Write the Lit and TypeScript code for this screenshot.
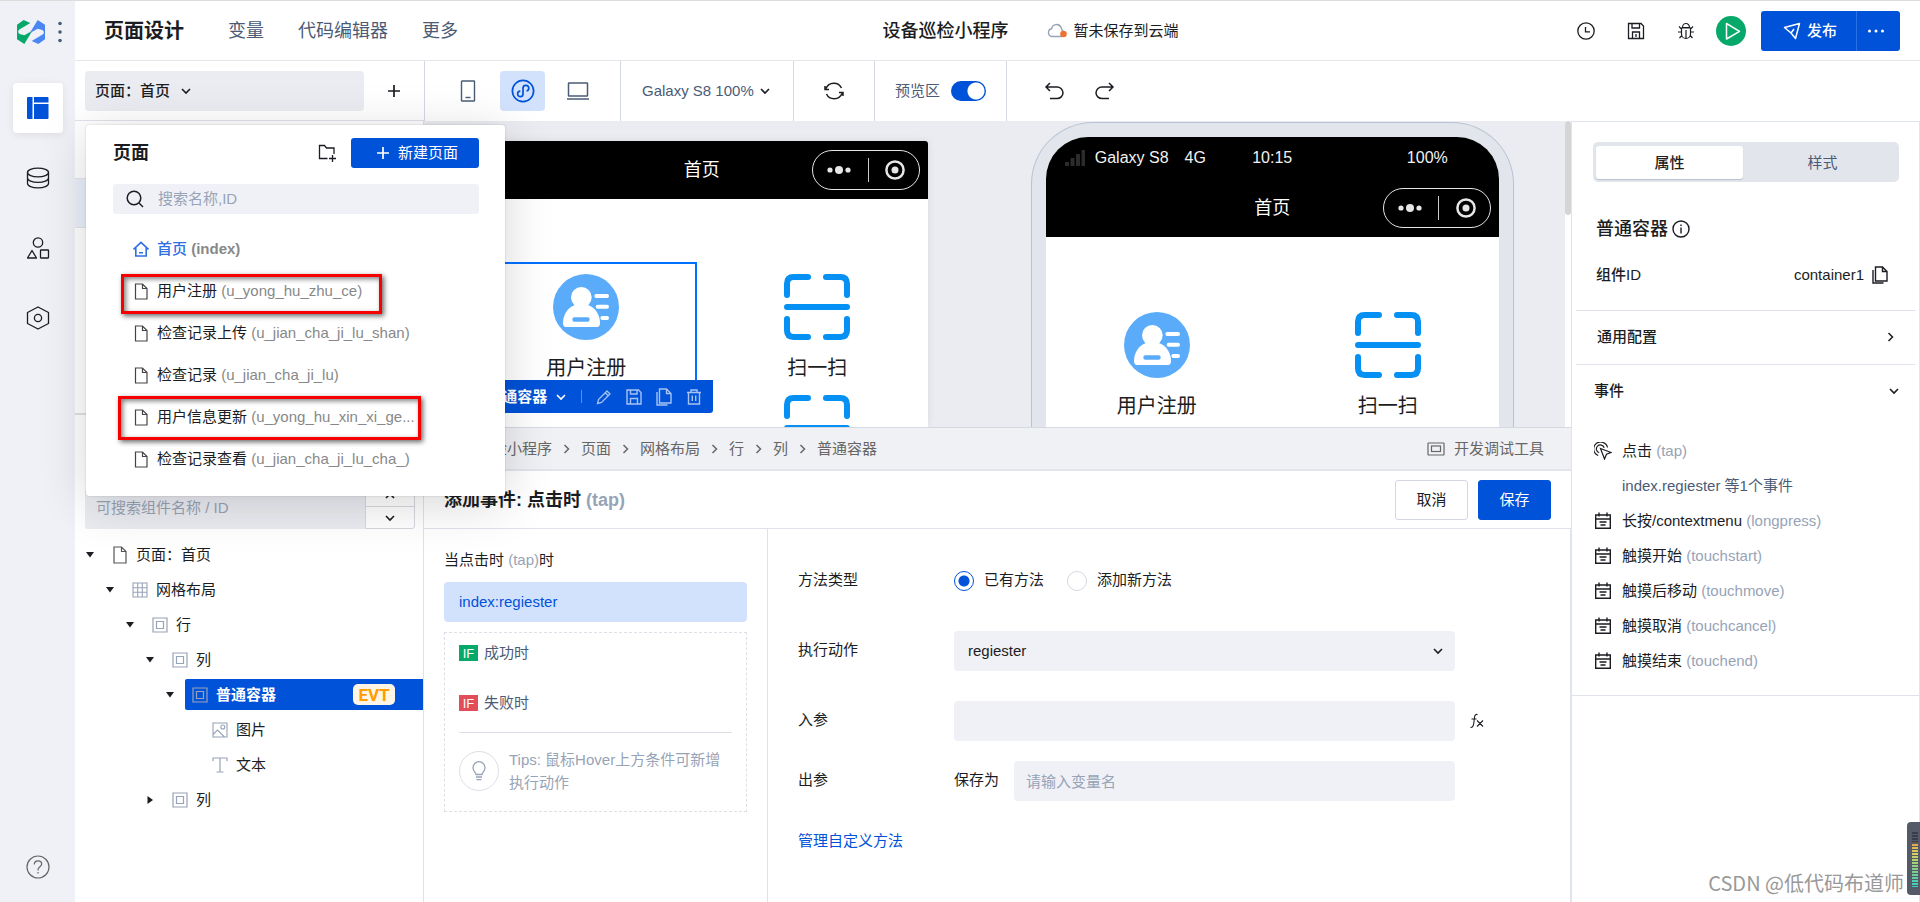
import { LitElement, html, css, svg, nothing } from "lit";
import { customElement, property } from "lit/decorators.js";
import { classMap } from "lit/directives/class-map.js";

const base = css`
  :host {
    box-sizing: border-box;
    font-family: "Liberation Sans", "Noto Sans CJK SC", sans-serif;
    font-size: 15px;
    line-height: 22px;
    color: #1b1d22;
  }
  *,
  *::before,
  *::after {
    box-sizing: border-box;
  }
  button,
  input,
  select {
    font: inherit;
    color: inherit;
    margin: 0;
    padding: 0;
    border: 0;
    background: none;
    border-radius: 0;
  }
  button {
    display: inline-flex;
    align-items: center;
    justify-content: center;
    cursor: pointer;
  }
  svg {
    display: block;
    flex: none;
  }
  a {
    text-decoration: none;
    color: inherit;
  }
  h1,
  h2,
  h3,
  p,
  ul {
    margin: 0;
    padding: 0;
    list-style: none;
  }
  .muted {
    color: #97a3b7;
  }
`;

const icon = (w: number, h: number, body: unknown, width = 1.5) => html`<svg
  width=${w}
  height=${h}
  viewBox="0 0 ${w} ${h}"
  fill="none"
  stroke="currentColor"
  stroke-width=${width}
  aria-hidden="true"
>${body}</svg>`;

const icons = {
  logo: html`<svg width="28" height="24" viewBox="0 0 84 72" aria-hidden="true">
    <path fill="#07a96b" d="M0 14L20 0L40 9L6 29Q0 36 8 42L22 46L46 32L22 72L0 58Z" />
    <path fill="#4a87f2" d="M84 58L64 72L44 63L78 43Q84 36 76 30L62 26L38 40L62 0L84 14Z" />
  </svg>`,
  layout: html`<svg width="22" height="22" viewBox="0 0 22 22" fill="#0052d9" aria-hidden="true">
    <path d="M1 0h4.500v22h-4.500a1 1 0 0 1-1-1v-20a1 1 0 0 1 1-1zM7 0h13.500a1 1 0 0 1 1 1v4.500h-14.500zM7 7h14.500v14a1 1 0 0 1-1 1h-13.500z" />
  </svg>`,
  database: icon(24, 22, svg`<ellipse cx="12" cy="5.500" rx="10.500" ry="4.300"/><path d="M1.500 5.500v11c0 2.400 4.700 4.300 10.500 4.300s10.500-1.900 10.500-4.300v-11M1.500 11c0 2.400 4.700 4.300 10.500 4.300s10.500-1.900 10.500-4.300"/>`, 1.3),
  shapes: icon(24, 22, svg`<circle cx="12" cy="5.500" r="4.700"/><path d="M6 13.500l4.500 7.500h-9z" stroke-linejoin="round"/><rect x="14.500" y="13" width="8" height="8" rx="0.500"/>`, 1.3),
  hexagon: icon(24, 24, svg`<path d="M12 1l10.500 5.500v11L12 23 1.500 17.500v-11z" stroke-linejoin="round"/><circle cx="12" cy="12" r="3.600"/>`, 1.3),
  help: icon(24, 24, svg`<circle cx="12" cy="12" r="11"/><path d="M8.300 9.500c0-2.200 1.600-3.700 3.700-3.700s3.700 1.400 3.700 3.300c0 2.500-3.700 2.800-3.700 5.700v.7M12 17v1.500"/>`, 1.2),
  down: icon(12, 12, svg`<path d="M2 4l4 4 4-4"/>`, 1.6),
  up: icon(12, 12, svg`<path d="M2 8l4-4 4 4"/>`, 1.6),
  right: icon(9, 12, svg`<path d="M2.500 2l4 4-4 4"/>`, 1.5),
  plus: icon(14, 14, svg`<path d="M7 1v12M1 7h12"/>`, 1.7),
  phone: icon(16, 22, svg`<rect x="1.500" y="1" width="13" height="20" rx="0.500"/><path d="M5.500 17.500h5"/>`, 1.4),
  mini: icon(24, 24, svg`<circle cx="12" cy="12" r="10.600"/><path d="M9.300 12.200a2.700 2.700 0 1 0 2.700 2.700V9.200a2.900 2.900 0 1 1 3.600 2.800"/>`, 1.7),
  laptop: icon(24, 20, svg`<rect x="2.500" y="2" width="19" height="13" rx="0.500"/><path d="M1 18h22"/>`, 1.5),
  refresh: icon(20, 20, svg`<path d="M2 7.500a8.500 8.500 0 0 1 15.500-.5M18 12.500a8.500 8.500 0 0 1-15.500.5M1 5v3.500h4M19 15v-3.500h-4"/>`, 1.5),
  undo: icon(20, 18, svg`<path d="M2 5h11a6 5.800 0 0 1 0 11.600H6M6 1L2 5l4 4"/>`, 1.5),
  redo: icon(20, 18, svg`<path d="M18 5H7a6 5.800 0 0 0 0 11.600h7M14 1l4 4-4 4"/>`, 1.5),
  cloud: html`<svg width="22" height="16" viewBox="0 0 22 16" fill="none" aria-hidden="true">
    <path d="M15 13.500H5a3.900 3.900 0 0 1-.4-7.700 5 5 0 0 1 9.500-1.300c.9 2 .4 3 2.900 4.500" stroke="#97a3b7" stroke-width="1.400" />
    <circle cx="16.500" cy="11" r="3.300" fill="#ed7230" />
  </svg>`,
  clock: icon(18, 18, svg`<circle cx="9" cy="9" r="8.200"/><path d="M8.500 5v4.800H13"/>`, 1.3),
  save: icon(18, 18, svg`<path d="M1.500 1.500h12.500l2.500 2.500v12.500h-15zM5 1.500v4.500h7.500v-4.500M5.500 16.500v-6.500h7v6.500M9 12v3" />`, 1.3),
  bug: icon(18, 18, svg`<path d="M5.500 5.500a3.500 4 0 0 1 7 0zM4.500 6h9v6a4.500 4.500 0 0 1-9 0zM9 8v9M4.500 10H1M13.500 10H17M4.500 7L2 4.500M13.500 7L16 4.500M4.800 13.500L2.500 16M13.200 13.500l2.300 2.500"/>`, 1.2),
  play: icon(30, 30, svg`<path d="M10.500 7.500v15.500l13-7.700z" stroke-linejoin="round"/>`, 1.5),
  plane: icon(18, 18, svg`<path d="M1.500 5.500L16.500 1.500 12.500 16.500 8 11zM8 11l3-4" stroke-linejoin="round"/>`, 1.5),
  dots: html`<svg width="18" height="6" viewBox="0 0 18 6" fill="currentColor" aria-hidden="true">
    <circle cx="2.500" cy="3" r="1.500" /><circle cx="9" cy="3" r="1.500" /><circle cx="15.500" cy="3" r="1.500" />
  </svg>`,
  folder: icon(18, 18, svg`<path d="M9.500 14.500H1.500v-13h5l2 2.500h7.500v6M14.500 11v7M11 14.500h7"/>`, 1.3),
  search: icon(18, 18, svg`<circle cx="8" cy="8" r="6.800"/><path d="M13 13l4 4"/>`, 1.5),
  home: icon(16, 16, svg`<path d="M0.500 8.500L8 1.300l7.500 7.200M2.800 7v8h10.400V7M6 11.800h4" />`, 1.6),
  file: icon(14, 17, svg`<path d="M1.500 1h7l4.500 4.500v10.500h-11.500zM8.500 1v4.500h4.500" />`, 1.2),
  filePage: icon(14, 18, svg`<path d="M1 1h7.500l4.500 4.500v11.500h-12zM8.500 1v4.500h4.500" />`, 1.2),
  grid: icon(16, 16, svg`<path d="M1 1h14v14h-14zM5.700 1v14M10.300 1v14M1 5.700h14M1 10.300h14"/>`, 1.1),
  box: icon(16, 16, svg`<path d="M1 1h14v14h-14zM4.500 4.500h7v7h-7z"/>`, 1.2),
  image: icon(16, 16, svg`<path d="M1 1h14v14h-14zM1 12.500l4.500-4.500 7 7"/><circle cx="10.800" cy="5" r="2"/>`, 1.1),
  text: icon(16, 16, svg`<path d="M1 4v-3h14v3M8 1v14M4.500 15h7"/>`, 1.2),
  info: icon(18, 18, svg`<circle cx="9" cy="9" r="8"/><path d="M9 7.500v6M9 4.500v1.500"/>`, 1.4),
  copy: icon(16, 18, svg`<path d="M3.500 1h7l4.500 4.500v9.500h-11.500zM10.500 1v4.500h4.500M1 4v13h10.500"/>`, 1.4),
  pencil: icon(16, 16, svg`<path d="M1.500 14.500l1-4L11 2l3 3-8.500 8.500zM9.200 3.800l3 3"/>`, 1.3),
  trash: icon(16, 16, svg`<path d="M1 3.500h14M5 3.500V1h6v2.500M2.500 3.500v11.500h11V3.500M6.300 6.500v5.500M9.700 6.500v5.500"/>`, 1.4),
  devtool: icon(18, 14, svg`<rect x="1" y="1" width="16" height="12" rx="0.500"/><rect x="4.500" y="4" width="9" height="5.500"/>`, 1.2),
  bulb: icon(16, 20, svg`<path d="M5 13.500c0-2-3-3.200-3-6.800a6 6 0 0 1 12 0c0 3.600-3 4.800-3 6.800zM5 16h6M5.500 18.700h5"/>`, 1.3),
  click: icon(18, 18, svg`<path d="M6.500 6.500l10.500 4-4.500 1.800-2 4.700zM4.200 13.500A7 7 0 1 1 13.500 5.500M5.200 10.800a4 4 0 1 1 5-5"/>`, 1.2),
  event: icon(18, 18, svg`<path d="M1.700 3h14.600v13.300h-14.600zM5 .5v4M13 .5v4M1.700 7h14.600M5.500 10h7M6.500 13h5"/>`, 1.4),
  fx: icon(16, 18, svg`<path d="M8.500 2.500c-3-1-3 3-3.300 5.500-.5 4-.7 8-3.700 7.500M2.500 7h5M8 8.500l6 6M14 8.500l-6 6"/>`, 1.1),
  signal: html`<svg width="20" height="16" viewBox="0 0 20 16" fill="#2b2b2b" aria-hidden="true">
    <path d="M0 12h4v4h-4zM5.500 8h4v8h-4zM11 4h4v12h-4zM16.500 0h3.500v16h-3.500z" />
  </svg>`,
  user: html`<svg width="66" height="66" viewBox="0 0 198 198" fill="#fff" aria-hidden="true">
    <circle cx="99" cy="99" r="99" fill="#5aacfa" />
    <circle cx="85" cy="70" r="31" />
    <path d="M30 146C30 114 55 93 70 93H100C116 93 141 114 141 146Q141 159 132 159H39Q30 159 30 146Z" />
    <rect x="58" y="130" width="52" height="13" rx="6" fill="#5aacfa" />
    <rect x="124" y="60" width="44" height="12" rx="6" /><rect x="128" y="92" width="40" height="12" rx="6" /><rect x="142" y="126" width="26" height="12" rx="6" />
  </svg>`,
  scan: html`<svg width="66" height="66" viewBox="0 0 198 198" fill="none" stroke="#0590f3" stroke-width="18" stroke-linecap="round" aria-hidden="true">
    <path d="M9 63V29Q9 9 29 9H72M126 9H169Q189 9 189 29V63M9 135V169Q9 189 29 189H72M126 189H169Q189 189 189 169V135M9 99H189" />
  </svg>`,
};

@customElement("mini-page")
class MiniPage extends LitElement {
  @property({ type: Boolean }) selected = false;

  static styles = [
    base,
    css`
      :host {
        display: block;
        background: #fff;
        width: 453px;
        flex: 1;
      }
      .nav {
        background: #000;
        color: #fff;
        height: 58px;
        display: grid;
        grid-template-columns: 1fr auto 1fr;
        align-items: center;
        padding: 0 8px;
        font-size: 18px;
      }
      .capsule {
        grid-column: 3;
        justify-self: end;
        width: 108px;
        height: 40px;
        border: 1px solid #e6e6e6;
        border-radius: 20px;
        display: flex;
        align-items: center;
        justify-content: space-between;
        padding: 0 14px;
      }
      .title {
        grid-column: 2;
      }
      .bar {
        width: 1px;
        height: 24px;
        background: #ccc;
      }
      .grid {
        display: grid;
        grid-template-columns: 1fr 1fr;
        gap: 9px;
        padding-top: 63px;
      }
      .tile {
        position: relative;
        height: 121px;
        padding-top: 12px;
        display: flex;
        flex-direction: column;
        align-items: center;
        gap: 13px;
        font-size: 20px;
        line-height: 30px;
      }
      .selected::after {
        content: "";
        position: absolute;
        inset: 0;
        border: 2px solid #0070ff;
      }
      .tools {
        position: absolute;
        z-index: 1;
        top: 118px;
        right: -16px;
        height: 33px;
        padding: 0 11px 0 12px;
        display: flex;
        align-items: center;
        gap: 14px;
        background: #0052d9;
        color: #a6c3f2;
        border-radius: 0 0 3px 3px;
        font-size: 15px;
        line-height: 22px;
      }
      .tools .name {
        color: #fff;
        font-weight: 700;
        gap: 8px;
        white-space: nowrap;
      }
      .tools .sep {
        width: 1px;
        height: 13px;
        background: #5b8fe6;
      }
    `,
  ];

  render() {
    const tile = (pic: unknown, label: string) => html`<div class="tile">${pic}<span>${label}</span></div>`;
    return html`
      <div class="nav">
        <span class="title">首页</span>
        <span class="capsule">
          <svg width="24" height="10" viewBox="0 0 24 10" fill="#e6e6e6"><circle cx="3" cy="5" r="2.600" /><circle cx="12" cy="5" r="4" /><circle cx="21" cy="5" r="2.600" /></svg>
          <span class="bar"></span>
          <svg width="20" height="20" viewBox="0 0 20 20"><circle cx="10" cy="10" r="8.600" fill="none" stroke="#e6e6e6" stroke-width="2.500" /><circle cx="10" cy="10" r="3.500" fill="#e6e6e6" /></svg>
        </span>
      </div>
      <div class="grid">
        <div>
          <div class=${classMap({ tile: true, selected: this.selected })}>
            ${icons.user}<span>用户注册</span>
            ${this.selected
              ? html`<div class="tools">
                  <button class="name">普通容器 ${icons.down}</button>
                  <span class="sep"></span>
                  <button aria-label="编辑">${icons.pencil}</button>
                  <button aria-label="保存">${icon(16, 16, svg`<path d="M1 1h11.500l2.500 2.500v11.500h-14zM4.500 1v4h6.500v-4M4.500 15v-5.500h7v5.500"/>`, 1.4)}</button>
                  <button aria-label="复制">${icons.copy}</button>
                  <button aria-label="删除">${icons.trash}</button>
                </div>`
              : nothing}
          </div>
        </div>
        <div>${tile(icons.scan, "扫一扫")}${this.selected ? tile(icons.scan, "") : nothing}</div>
      </div>
    `;
  }
}

const pages = [
  ["用户注册", "(u_yong_hu_zhu_ce)"],
  ["检查记录上传", "(u_jian_cha_ji_lu_shan)"],
  ["检查记录", "(u_jian_cha_ji_lu)"],
  ["用户信息更新", "(u_yong_hu_xin_xi_ge..."],
  ["检查记录查看", "(u_jian_cha_ji_lu_cha_)"],
];

@customElement("page-popup")
class PagePopup extends LitElement {
  static styles = [
    base,
    css`
      :host {
        display: block;
        background: #fff;
        border-radius: 3px;
        padding: 13px 26px 16px 27px;
        box-shadow: 0 0 2px rgba(0, 0, 0, 0.2), 0 8px 50px rgba(0, 0, 0, 0.16);
      }
      .head {
        display: flex;
        align-items: center;
        gap: 15px;
      }
      h2 {
        flex: 1;
        font-size: 18px;
        font-weight: 700;
      }
      .new {
        width: 128px;
        height: 30px;
        gap: 8px;
        padding-left: 4px;
        border-radius: 3px;
        background: #0052d9;
        color: #fff;
      }
      .search {
        display: flex;
        align-items: center;
        gap: 14px;
        height: 30px;
        margin: 16px 0 14px;
        padding-left: 13px;
        background: #eff1f6;
        border-radius: 3px;
      }
      input {
        flex: 1;
        outline: 0;
      }
      input::placeholder {
        color: #97a3b7;
      }
      li a {
        display: flex;
        align-items: center;
        gap: 8px;
        height: 42px;
        padding: 0 40px 0 20px;
      }
      .pic {
        flex: none;
        width: 16px;
        display: flex;
        justify-content: center;
        color: #444;
      }
      .name {
        white-space: nowrap;
      }
      .id {
        color: #888;
      }
      .home {
        color: #2e6fe4;
        font-weight: 500;
      }
      .home .id {
        font-weight: 700;
      }
      .home .pic {
        color: #2e6fe4;
      }
      .mark {
        position: absolute;
        border: 3px solid #f60000;
        box-shadow: 2px 2px 5px rgba(0, 0, 0, 0.6), inset 2px 2px 5px rgba(0, 0, 0, 0.5);
        pointer-events: none;
      }
      .register {
        left: 35px;
        top: 149px;
        width: 261px;
        height: 40px;
      }
      .update {
        left: 32px;
        top: 271px;
        width: 303px;
        height: 44px;
      }
    `,
  ];

  render() {
    return html`
      <div class="head">
        <h2>页面</h2>
        <button aria-label="新建文件夹">${icons.folder}</button>
        <button class="new">${icons.plus} 新建页面</button>
      </div>
      <label class="search">${icons.search}<input aria-label="搜索" placeholder="搜索名称,ID" /></label>
      <ul>
        <li>
          <a href="#index" class="home"><span class="pic">${icons.home}</span><span class="name">首页 <span class="id">(index)</span></span></a>
        </li>
        ${pages.map(
          ([name, id]) => html`<li>
            <a href="#"><span class="pic">${icons.file}</span><span class="name">${name} <span class="id">${id}</span></span></a>
          </li>`
        )}
      </ul>
      <span class="mark register"></span>
      <span class="mark update"></span>
    `;
  }
}

@customElement("outline-tree")
class OutlineTree extends LitElement {
  static styles = [
    base,
    css`
      :host {
        display: flex;
        flex-direction: column;
        border-right: 1px solid #dfe2e8;
        min-height: 0;
      }
      .pages {
        padding-top: 57px;
        height: 294px;
        border-bottom: 2px solid #e0e0e0;
      }
      .current {
        height: 50px;
        background: #eaf0fb;
        border: 1px solid #e1e5ee;
        border-width: 1px 0;
      }
      .find {
        display: flex;
        padding: 74px 8px 0 10px;
      }
      .find input {
        flex: 1;
        height: 40px;
        padding: 0 11px 4px;
        background: #ebecf1;
        border-radius: 3px 0 0 3px;
        outline: 0;
      }
      input::placeholder {
        color: #97a3b7;
      }
      .step {
        display: flex;
        flex-direction: column;
        width: 50px;
        border: 1px solid #d5d8de;
        border-radius: 0 3px 3px 0;
      }
      .step button {
        flex: 1;
      }
      .step button:first-child {
        padding-bottom: 4px;
      }
      .step button + button {
        flex: 0 0 22px;
        border-top: 1px solid #d5d8de;
      }
      ul {
        padding-top: 8px;
      }
      .row {
        display: flex;
        align-items: center;
        height: 35px;
        padding-left: calc(10px + var(--depth) * 20px);
      }
      .caret {
        width: 10px;
        display: flex;
        justify-content: center;
      }
      .node {
        flex: 1;
        display: flex;
        align-items: center;
        gap: 8px;
        height: 31px;
        margin-left: 10px;
        padding-left: 7px;
        border-radius: 2px 0 0 2px;
      }
      .pic {
        color: #97a3b7;
        width: 16px;
        display: flex;
        justify-content: center;
      }
      .root .pic {
        color: #555;
      }
      .active {
        background: #0052d9;
        color: #fff;
        font-weight: 700;
      }
      .badge {
        margin-left: auto;
        margin-right: 28px;
        width: 42px;
        height: 21px;
        border-radius: 5px;
        background: #fff5e6;
        color: #ff9d00;
        font-family: Roboto, sans-serif;
        font-size: 17px;
        line-height: 23px;
        text-align: center;
      }
    `,
  ];

  rows: [number, string, string, unknown][] = [
    [0, "open", "页面：首页", icons.filePage],
    [1, "open", "网格布局", icons.grid],
    [2, "open", "行", icons.box],
    [3, "open", "列", icons.box],
    [4, "open", "普通容器", icons.box],
    [5, "", "图片", icons.image],
    [5, "", "文本", icons.text],
    [3, "closed", "列", icons.box],
  ];

  render() {
    return html`
      <div class="pages"><div class="current"></div></div>
      <div class="find">
        <input aria-label="搜索组件" placeholder="可搜索组件名称 / ID" />
        <div class="step">
          <button aria-label="上一个">${icons.up}</button>
          <button aria-label="下一个">${icons.down}</button>
        </div>
      </div>
      <ul>
        ${this.rows.map(([depth, state, label, pic]) => {
          const active = depth === 4;
          return html`<li class=${classMap({ row: true, root: depth === 0 })} style="--depth:${depth}">
            <span class="caret">
              ${state
                ? html`<svg width="10" height="10" viewBox="0 0 10 10" fill="#1b1d22"><path d=${state === "open" ? "M1 2h8l-4 5.500z" : "M2.500 1v8l5.500-4z"} /></svg>`
                : nothing}
            </span>
            <span class=${classMap({ node: true, active })}>
              <span class="pic">${pic}</span>${label}${active ? html`<span class="badge">EVT</span>` : nothing}
            </span>
          </li>`;
        })}
      </ul>
    `;
  }
}

@customElement("event-editor")
class EventEditor extends LitElement {
  static styles = [
    base,
    css`
      :host {
        display: flex;
        flex-direction: column;
        background: #fff;
        border-top: 1px solid #d5d9e2;
      }
      .crumbs {
        display: flex;
        align-items: center;
        justify-content: space-between;
        height: 43px;
        padding: 0 27px 0 23px;
        background: #eff1f5;
        border-bottom: 2px solid #e2e4ec;
        color: #666;
      }
      .path {
        display: flex;
        align-items: center;
        gap: 10px;
      }
      .devtool {
        gap: 9px;
      }
      .head {
        display: flex;
        align-items: center;
        gap: 10px;
        height: 58px;
        padding: 0 20px;
        border-bottom: 1px solid #dfe2ea;
      }
      h2 {
        flex: 1;
        font-size: 18px;
        line-height: 26px;
        font-weight: 700;
      }
      .btn {
        width: 73px;
        height: 40px;
        border: 1px solid #d3d8e2;
        border-radius: 3px;
      }
      .primary {
        background: #0052d9;
        border-color: #0052d9;
        color: #fff;
      }
      .body {
        flex: 1;
        display: grid;
        grid-template-columns: 344px 1fr;
        border-right: 1px solid #e0e4ec;
      }
      .flow {
        border-right: 1px solid #dfe2ea;
        padding: 20px 20px 0;
      }
      .action {
        display: flex;
        align-items: center;
        width: 100%;
        height: 40px;
        margin: 11px 0 10px;
        padding: 0 15px;
        justify-content: flex-start;
        background: #d3e2fc;
        color: #0052d9;
        border-radius: 4px;
      }
      .branch {
        border: 1px dashed #dcdfe6;
        padding: 0 14px 17px;
      }
      .cond {
        display: flex;
        align-items: center;
        gap: 6px;
        height: 40px;
        color: #4b5b76;
      }
      .cond + .cond {
        margin-top: 10px;
      }
      .if {
        width: 19px;
        height: 16px;
        background: #07a96b;
        color: #fff;
        font-size: 13px;
        line-height: 17px;
        text-align: center;
      }
      .fail {
        background: #e34d59;
      }
      .tips {
        display: flex;
        align-items: center;
        gap: 10px;
        margin-top: 9px;
        padding-top: 15px;
        border-top: 1px solid #dcdfe6;
        color: #97a3b7;
        line-height: 23px;
      }
      .tips p {
        flex: 1;
      }
      .bulb {
        width: 40px;
        height: 40px;
        border: 1px solid #dcdfe6;
        border-radius: 50%;
        display: flex;
        align-items: center;
        justify-content: center;
      }
      .form {
        padding: 32px 0 0 30px;
      }
      .field {
        display: grid;
        grid-template-columns: 156px 1fr 115px;
        height: 40px;
        margin-bottom: 30px;
      }
      .tight {
        margin-bottom: 20px;
      }
      .label {
        line-height: 38px;
      }
      .radios {
        display: flex;
        gap: 23px;
      }
      .radios label {
        display: flex;
        align-items: flex-start;
        gap: 10px;
        line-height: 38px;
      }
      input[type="radio"] {
        appearance: none;
        width: 20px;
        height: 20px;
        margin-top: 10px;
        border: 1px solid #d3d8e2;
        border-radius: 50%;
      }
      input[type="radio"]:checked {
        border-color: #0052d9;
        background: radial-gradient(circle, #0052d9 5px, transparent 6px);
      }
      .pick {
        display: grid;
        align-items: center;
      }
      .pick select,
      .pick svg {
        grid-area: 1 / 1;
      }
      .pick svg {
        justify-self: end;
        margin-right: 11px;
        pointer-events: none;
      }
      select,
      .text {
        appearance: none;
        width: 100%;
        height: 40px;
        padding: 0 14px;
        background: #eff1f6;
        border-radius: 4px;
        outline: 0;
      }
      .fx {
        width: 16px;
        margin-left: 14px;
      }
      .save {
        display: flex;
        gap: 15px;
      }
      .save .text {
        flex: 1;
        padding: 0 12px;
      }
      .text::placeholder {
        color: #97a3b7;
      }
      .link {
        line-height: 40px;
        color: #0052d9;
      }
    `,
  ];

  render() {
    const crumbs = ["设备巡检小程序", "页面", "网格布局", "行", "列", "普通容器"];
    return html`
      <div class="crumbs">
        <nav class="path">${crumbs.map((c, i) => html`${i ? icons.right : nothing}<a href="#">${c}</a>`)}</nav>
        <button class="devtool">${icons.devtool} 开发调试工具</button>
      </div>
      <div class="head">
        <h2>添加事件: 点击时 <span class="muted">(tap)</span></h2>
        <button class="btn">取消</button>
        <button class="btn primary">保存</button>
      </div>
      <div class="body">
        <div class="flow">
          <p>当点击时 <span class="muted">(tap)</span>时</p>
          <button class="action">index:regiester</button>
          <div class="branch">
            <div class="cond"><span class="if">IF</span>成功时</div>
            <div class="cond"><span class="if fail">IF</span>失败时</div>
            <div class="tips">
              <span class="bulb">${icons.bulb}</span>
              <p>Tips: 鼠标Hover上方条件可新增执行动作</p>
            </div>
          </div>
        </div>
        <div class="form">
          <div class="field">
            <span class="label">方法类型</span>
            <div class="radios">
              <label><input type="radio" name="kind" checked />已有方法</label>
              <label><input type="radio" name="kind" />添加新方法</label>
            </div>
          </div>
          <div class="field">
            <label class="label" for="act">执行动作</label>
            <div class="pick">
              <select id="act"><option>regiester</option></select>
              ${icons.down}
            </div>
          </div>
          <div class="field tight">
            <label class="label" for="params">入参</label>
            <input class="text" id="params" />
            <button class="fx" aria-label="表达式">${icons.fx}</button>
          </div>
          <div class="field tight">
            <span class="label">出参</span>
            <div class="save">
              <label class="label" for="out">保存为</label>
              <input class="text" id="out" placeholder="请输入变量名" />
            </div>
          </div>
          <a class="link" href="#">管理自定义方法</a>
        </div>
      </div>
    `;
  }
}

@customElement("props-panel")
class PropsPanel extends LitElement {
  static styles = [
    base,
    css`
      :host {
        display: block;
        background: #fff;
        border: 1px solid #e0e4ec;
        border-bottom: 0;
      }
      .tabs {
        display: grid;
        grid-template-columns: 147px 1fr;
        gap: 3px;
        height: 40px;
        margin: 20px 20px 0 21px;
        padding: 4px 0 3px 3px;
        border-radius: 5px;
        background: #e2e6ec;
        color: #4b5b76;
      }
      .tabs .on {
        background: #fff;
        border-radius: 3px;
        color: #1b1d22;
        font-weight: 500;
        box-shadow: 0 1px 1px #b8c1d0;
      }
      .title {
        display: flex;
        align-items: center;
        gap: 4px;
        height: 26px;
        margin: 34px 24px 0;
      }
      h2 {
        font-size: 18px;
        font-weight: 500;
      }
      .id {
        display: flex;
        align-items: center;
        gap: 8px;
        margin: 22px 31px 24px 24px;
      }
      .id b {
        flex: 1;
        font-weight: 500;
      }
      .fold {
        display: flex;
        justify-content: space-between;
        align-items: center;
        height: 54px;
        margin: 0 4px;
        padding: 0 20px 2px 21px;
        border-top: 1px solid #dfe2ea;
      }
      .open {
        padding: 0 15px 2px 18px;
      }
      h3 {
        font-size: 15px;
        font-weight: 500;
      }
      .events {
        padding: 15px 22px 17px;
        border-bottom: 1px solid #dfe2ea;
      }
      li {
        display: flex;
        align-items: center;
        gap: 10px;
        height: 35px;
      }
      li .bound {
        margin-left: 28px;
        color: #4b5b76;
      }
    `,
  ];

  render() {
    const events = [
      ["长按/contextmenu", "(longpress)"],
      ["触摸开始", "(touchstart)"],
      ["触摸后移动", "(touchmove)"],
      ["触摸取消", "(touchcancel)"],
      ["触摸结束", "(touchend)"],
    ];
    return html`
      <div class="tabs"><button class="on">属性</button><button>样式</button></div>
      <div class="title"><h2>普通容器</h2>${icons.info}</div>
      <div class="id"><b>组件ID</b><span>container1</span>${icons.copy}</div>
      <div class="fold"><h3>通用配置</h3>${icons.right}</div>
      <div class="fold open"><h3>事件</h3>${icons.down}</div>
      <ul class="events">
        <li>${icons.click}<span>点击 <span class="muted">(tap)</span></span></li>
        <li><a class="bound" href="#">index.regiester 等1个事件</a></li>
        ${events.map(([n, k]) => html`<li>${icons.event}<span>${n} <span class="muted">${k}</span></span></li>`)}
      </ul>
    `;
  }
}

@customElement("app-root")
class AppRoot extends LitElement {
  static styles = [
    base,
    css`
      :host {
        display: grid;
        grid-template-columns: 75px 1fr;
        grid-template-rows: minmax(0, 1fr);
        height: 100vh;
        overflow: hidden;
        position: relative;
        border-top: 1px solid #dcdcdc;
        background: #fff;
      }
      .rail {
        display: flex;
        flex-direction: column;
        align-items: center;
        gap: 20px;
        padding-bottom: 10px;
        background: #eff1f6;
      }
      .brand {
        display: flex;
        align-items: center;
        justify-content: flex-end;
        gap: 13px;
        width: 100%;
        height: 62px;
        padding-right: 13px;
        color: #4b5b76;
      }
      .rail button {
        width: 50px;
        height: 50px;
        border-radius: 4px;
      }
      .rail .on {
        background: #fff;
        box-shadow: 0 2px 8px rgba(0, 0, 0, 0.08);
      }
      .rail .help {
        margin-top: auto;
        color: #666;
      }
      .main {
        display: flex;
        flex-direction: column;
        min-width: 0;
        min-height: 0;
      }
      header {
        display: grid;
        grid-template-columns: 1fr auto 1fr;
        align-items: center;
        height: 60px;
        padding: 0 20px 0 29px;
        border-bottom: 1px solid #e4e6eb;
      }
      nav {
        display: flex;
        align-items: center;
        gap: 34px;
        font-size: 18px;
        line-height: 26px;
        color: #4b5b76;
      }
      h1 {
        margin-right: 10px;
        font-size: 20px;
        font-weight: 700;
        color: #1b1d22;
      }
      .project {
        display: flex;
        align-items: center;
        gap: 39px;
        padding-left: 57px;
      }
      .project b {
        font-size: 18px;
        font-weight: 500;
      }
      .state {
        display: flex;
        align-items: center;
        gap: 4px;
      }
      .actions {
        display: flex;
        align-items: center;
        justify-content: flex-end;
      }
      .actions .tool {
        width: 50px;
        height: 40px;
      }
      .run {
        width: 30px;
        height: 30px;
        margin: 0 15px 0 5px;
        border-radius: 50%;
        background: #07a96b;
        color: #fff;
      }
      .publish {
        width: 95px;
        height: 40px;
        gap: 6px;
        padding-left: 3px;
        font-weight: 500;
        border-radius: 3px 0 0 3px;
        background: #0052d9;
        color: #fff;
      }
      .more {
        width: 44px;
        height: 40px;
        padding-right: 5px;
        border-left: 1px solid #2a70e6;
        border-radius: 0 3px 3px 0;
        background: #0052d9;
        color: #fff;
      }
      .toolbar {
        display: flex;
        height: 60px;
      }
      .cell {
        display: flex;
        align-items: center;
        border-right: 1px solid #d3d8e2;
        color: #4b5b76;
        white-space: nowrap;
      }
      .page {
        position: relative;
        width: 350px;
        padding-left: 10px;
        border-bottom: 1px solid #dfe2e8;
        color: #1b1d22;
      }
      .page .current {
        flex: 1;
        height: 40px;
        justify-content: flex-start;
        gap: 10px;
        padding: 0 10px;
        border-radius: 4px;
        background: #ebecf1;
        font-weight: 500;
      }
      .page .add {
        width: 60px;
        height: 40px;
      }
      page-popup {
        position: absolute;
        z-index: 5;
        left: 11px;
        top: 64px;
        width: 419px;
      }
      .devices {
        gap: 10px;
        width: 196px;
        padding-left: 20px;
      }
      .devices button {
        width: 45px;
        height: 40px;
        border-radius: 4px;
      }
      .devices .on {
        background: #d3e2fc;
        color: #0052d9;
      }
      .model {
        width: 173px;
        padding: 0 21px;
      }
      .model button {
        gap: 5px;
      }
      .model svg,
      .black {
        color: #1b1d22;
      }
      .reload {
        width: 81px;
        justify-content: center;
      }
      .preview {
        gap: 11px;
        width: 132px;
        padding-left: 20px;
      }
      .switch {
        appearance: none;
        flex: none;
        width: 35px;
        height: 20px;
        border-radius: 10px;
        background: radial-gradient(circle at 25px 10px, #fff 8px, transparent 9px) #0052d9;
      }
      .history {
        display: flex;
        align-items: center;
        gap: 31px;
        padding-left: 37px;
      }
      .work {
        flex: 1;
        min-height: 0;
        display: grid;
        grid-template-columns: 349px 1fr 349px;
        grid-template-rows: minmax(0, 1fr);
      }
      .center {
        display: flex;
        flex-direction: column;
        min-width: 0;
        min-height: 0;
      }
      .canvas {
        flex: 1;
        min-height: 0;
        display: flex;
        overflow: hidden;
        background: #ebecf1;
      }
      .stage {
        flex: 1;
        display: flex;
        justify-content: space-around;
        min-width: 0;
      }
      .design {
        display: flex;
        margin-top: 20px;
        border-radius: 3px 3px 0 0;
        overflow: hidden;
        box-shadow: 0 0 8px rgba(0, 0, 0, 0.08);
      }
      .device {
        display: flex;
        flex-direction: column;
        margin-top: 1px;
        padding: 14px 14px 0;
        border: 1px solid #b9c4d3;
        border-bottom: 0;
        border-radius: 62px 62px 0 0;
        background: #e2e6ec;
      }
      .status {
        display: grid;
        grid-template-columns: 1fr auto 1fr;
        align-items: center;
        height: 42px;
        padding: 0 51px 0 19px;
        border-radius: 42px 42px 0 0;
        background: #000;
        color: #f2f2f2;
        font-size: 16px;
      }
      .carrier {
        display: flex;
        align-items: center;
        gap: 10px;
      }
      .carrier .net {
        margin-left: 6px;
      }
      .time {
        padding-left: 32px;
      }
      .battery {
        text-align: right;
      }
      .scroll {
        width: 6px;
        background: #fff;
      }
      .thumb {
        height: 94px;
        border-radius: 3px;
        background: #d5d5d5;
      }
      event-editor {
        flex: 0 0 475px;
      }
      .watermark {
        position: absolute;
        right: 16px;
        bottom: 4px;
        font-family: "Noto Sans CJK SC", sans-serif;
        font-size: 20px;
        line-height: 30px;
        color: #999;
        text-shadow: 1px 1px 0 #fff;
      }
      .meter {
        position: absolute;
        right: 0;
        bottom: 7px;
        width: 13px;
        height: 73px;
        padding: 9px 2px 8px 5px;
        border-radius: 4px 0 0 4px;
        background: #555a69;
      }
      .meter i {
        display: block;
        height: 100%;
        background: repeating-linear-gradient(#555a69 0 1px, transparent 1px 3px),
          linear-gradient(#3a3d49 0 20%, #e8a04a 22%, #d8d060 40%, #8fd080 65%, #35d0c0);
      }
    `,
  ];

  render() {
    return html`
      <aside class="rail">
        <div class="brand">
          ${icons.logo}
          <svg width="4" height="22" viewBox="0 0 4 22" fill="currentColor"><circle cx="2" cy="2.500" r="1.800" /><circle cx="2" cy="11" r="1.800" /><circle cx="2" cy="19.500" r="1.800" /></svg>
        </div>
        <button class="on" aria-label="页面设计">${icons.layout}</button>
        <button aria-label="数据源">${icons.database}</button>
        <button aria-label="组件">${icons.shapes}</button>
        <button aria-label="设置">${icons.hexagon}</button>
        <button class="help" aria-label="帮助">${icons.help}</button>
      </aside>
      <div class="main">
        <header>
          <nav>
            <h1>页面设计</h1>
            <a href="#">变量</a><a href="#">代码编辑器</a><a href="#">更多</a>
          </nav>
          <div class="project">
            <b>设备巡检小程序</b>
            <span class="state">${icons.cloud} 暂未保存到云端</span>
          </div>
          <div class="actions">
            <button class="tool" aria-label="历史">${icons.clock}</button>
            <button class="tool" aria-label="保存">${icons.save}</button>
            <button class="tool" aria-label="调试">${icons.bug}</button>
            <button class="run" aria-label="预览">${icons.play}</button>
            <button class="publish">${icons.plane} 发布</button>
            <button class="more" aria-label="更多">${icons.dots}</button>
          </div>
        </header>
        <div class="toolbar">
          <div class="cell page">
            <button class="current">页面：首页 ${icons.down}</button>
            <button class="add" aria-label="新增">${icons.plus}</button>
            <page-popup></page-popup>
          </div>
          <div class="cell devices">
            <button aria-label="手机">${icons.phone}</button>
            <button class="on" aria-label="小程序">${icons.mini}</button>
            <button aria-label="电脑">${icons.laptop}</button>
          </div>
          <div class="cell model"><button>Galaxy S8 100% ${icons.down}</button></div>
          <div class="cell reload"><button class="black" aria-label="刷新">${icons.refresh}</button></div>
          <label class="cell preview">预览区<input type="checkbox" class="switch" checked /></label>
          <div class="history">
            <button aria-label="撤销">${icons.undo}</button>
            <button aria-label="重做">${icons.redo}</button>
          </div>
        </div>
        <div class="work">
          <outline-tree></outline-tree>
          <div class="center">
            <div class="canvas">
              <div class="stage">
                <div class="design"><mini-page selected></mini-page></div>
                <div class="device">
                  <div class="status">
                    <span class="carrier">${icons.signal}<span>Galaxy S8</span><span class="net">4G</span></span>
                    <span class="time">10:15</span>
                    <span class="battery">100%</span>
                  </div>
                  <mini-page></mini-page>
                </div>
              </div>
              <div class="scroll"><div class="thumb"></div></div>
            </div>
            <event-editor></event-editor>
          </div>
          <props-panel></props-panel>
        </div>
      </div>
      <div class="meter"><i></i></div>
      <div class="watermark">CSDN @低代码布道师</div>
    `;
  }
}
